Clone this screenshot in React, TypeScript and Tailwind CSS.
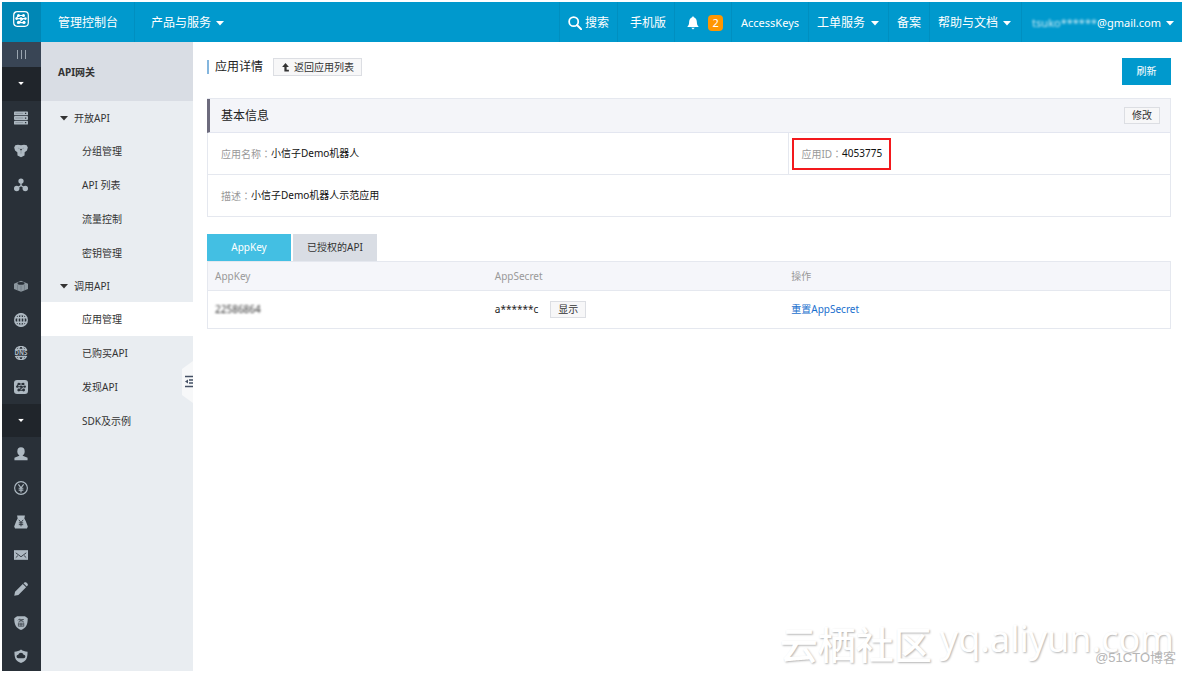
import type { ReactNode } from "react";

const fontStack = "font-['Noto_Sans','Noto_Sans_CJK_SC',sans-serif]";

function Caret({ className = "" }: { className?: string }) {
  return (
    <svg viewBox="0 0 8 5" className={`h-[5px] w-2 shrink-0 ${className}`} fill="currentColor" aria-hidden="true">
      <path d="M0 0h8L4 4.6z" />
    </svg>
  );
}

function Icon({ children, className = "size-[14px]" }: { children: ReactNode; className?: string }) {
  return (
    <svg viewBox="0 0 16 16" className={`${className} shrink-0`} fill="currentColor" aria-hidden="true">
      {children}
    </svg>
  );
}

// network pattern inside the gateway logo
function GatewayNodes({ color }: { color: string }) {
  return (
    <g fill={color} stroke={color}>
      <path d="M5 4.500h6M3.500 7.600h9M10.500 7.600L5.500 11.600h6M5 4.500L3.500 7.600" fill="none" strokeWidth="1.200" />
      <g stroke="none">
        <circle cx="5.500" cy="4.500" r="1.500" />
        <circle cx="10.500" cy="4.500" r="1.500" />
        <circle cx="3.600" cy="7.600" r="1.300" />
        <circle cx="8" cy="7.600" r="1.300" />
        <circle cx="12.400" cy="7.600" r="1.300" />
        <circle cx="5.500" cy="11.400" r="1.600" />
        <circle cx="11" cy="11.400" r="1.600" />
      </g>
    </g>
  );
}

const railItems: { label: string; icon?: ReactNode; toggle?: boolean }[] = [
  { label: "产品与服务", toggle: true },
  {
    label: "云服务器",
    icon: (
      <>
        <rect y="0.5" width="16" height="4.4" rx="1" />
        <rect y="5.8" width="16" height="4.4" rx="1" />
        <rect y="11.1" width="16" height="4.4" rx="1" />
        <path d="M1.5 2.7h9M1.5 8h9M1.5 13.3h9" stroke="#7d8890" strokeWidth="0.8" />
        <path d="M12.5 2h1.5v1.5h-1.5zM12.5 7.3h1.5v1.5h-1.5zM12.5 12.6h1.5v1.5h-1.5z" fill="#293038" />
      </>
    ),
  },
  {
    label: "云数据库",
    icon: (
      <>
        <path d="M1.500 1.500L4.500.8l3.500.7 3.500-.7 3 .7 1.300 2.500-1 3.500-2.600 1.800-.2 3.700L8 15.200l-4-2.200-.2-3.700L1.200 7.500.2 4z" />
        <circle cx="8" cy="6.300" r="1" fill="#293038" />
        <path d="M8 8v3M4.500 4.500l2 1M11.500 4.500l-2 1" stroke="#7d8890" strokeWidth="0.7" />
      </>
    ),
  },
  {
    label: "负载均衡",
    icon: (
      <>
        <circle cx="8" cy="3.500" r="3" />
        <circle cx="3.100" cy="12" r="3.100" />
        <circle cx="12.900" cy="12" r="3.100" />
        <path d="M8 4v4.500M8 8.500L3 12M8 8.500L13 12" stroke="currentColor" strokeWidth="1.500" />
      </>
    ),
  },
  { label: "" },
  { label: "" },
  {
    label: "对象存储",
    icon: (
      <>
        <path d="M0 5.500L8 2l8 3.500v6L8 14.500 0 11.500z" opacity="0.75" />
        <ellipse cx="8" cy="5" rx="4" ry="1.500" fill="#293038" />
        <path d="M4 6.500v6M8 7.500v6M12 6.500v6" stroke="#68737d" strokeWidth="0.7" />
      </>
    ),
  },
  {
    label: "CDN",
    icon: (
      <g fill="none" stroke="currentColor" strokeWidth="1.700">
        <circle cx="8" cy="8" r="7.100" />
        <ellipse cx="8" cy="8" rx="3.500" ry="7.100" />
        <path d="M1 5.500h14M1 10.500h14M8 1v14" />
      </g>
    ),
  },
  {
    label: "云解析",
    icon: (
      <>
        <path
          d="M1.500 4.600A7.200 7.200 0 0 1 14.500 4.600M1.500 11.400A7.200 7.200 0 0 0 14.500 11.400M4.500 4.500L6.500 1M11.500 4.500L9.500 1M4.500 11.500L6.500 15M11.500 11.500L9.500 15M2 4h12M2 12h12"
          fill="none"
          stroke="currentColor"
          strokeWidth="1.500"
        />
        <text x="8" y="10.600" fontSize="7" fontWeight="700" textAnchor="middle">
          DNS
        </text>
      </>
    ),
  },
  {
    label: "API网关",
    icon: (
      <>
        <rect width="16" height="16" rx="3.500" />
        <GatewayNodes color="#293038" />
      </>
    ),
  },
  { label: "用户中心", toggle: true },
  {
    label: "账号管理",
    icon: (
      <>
        <ellipse cx="8" cy="5" rx="4.200" ry="4.600" />
        <path d="M6 8h4v2l5.500 2.300V15H.5v-2.700L6 10z" />
      </>
    ),
  },
  {
    label: "费用",
    icon: (
      <g fill="none" stroke="currentColor">
        <circle cx="8" cy="8" r="7.300" strokeWidth="1.300" />
        <path d="M5 3.800l3 4 3-4M8 7.800V13M5.300 8.300h5.400M5.300 10.500h5.400" strokeWidth="1.300" />
      </g>
    ),
  },
  {
    label: "续费管理",
    icon: (
      <>
        <path d="M3.500.5h9L11.800 4 13.500 7l2.300 6-1 2.500H1.200L.2 13 2.500 7l1.700-3z" />
        <path d="M5.500 5.500L8 8.500l2.500-3M8 8.500V13M5.500 9h5M5.500 11h5" fill="none" stroke="#293038" strokeWidth="1" />
      </>
    ),
  },
  {
    label: "消息中心",
    icon: (
      <>
        <rect y="2.500" width="16" height="11" />
        <path d="M2 5.500l6 4.500 6-4.500M2 11l2.500-2.300M14 11l-2.500-2.300" fill="none" stroke="#293038" strokeWidth="1" />
      </>
    ),
  },
  {
    label: "工单管理",
    icon: <path d="M.3 15.700L1.200 11 10 2.200 13.800 6 5 14.800zM10.800 1.500L12.300.2h1.500L15.800 2.200v1.500L14.500 5.200z" />,
  },
  {
    label: "备案管理",
    icon: (
      <>
        <path d="M8 16C2.500 13.500.3 10.500.3 2.500L3.500.2h9l3.200 2.300C15.700 10.500 13.500 13.500 8 16z" />
        <path d="M6.500 3L4.500 5M6 4h5L5 7M6 4.500L11.500 7M5 8.200h6.200v3.500H5zM8 8.200v3.500M5 10h6" fill="none" stroke="#293038" strokeWidth="0.700" />
      </>
    ),
  },
  {
    label: "安全管控",
    icon: (
      <>
        <path d="M8 16C2.500 13.500.5 11.500.5 3 3.500 3 6 2 8 .5 10 2 12.500 3 15.500 3 15.500 11.500 13.500 13.500 8 16z" />
        <path d="M5 10.500a2 2 0 0 1-.2-4 3.300 3.300 0 0 1 6.200 0 2 2 0 0 1 0 4z" fill="#293038" />
      </>
    ),
  },
];

const menuGroups = [
  { title: "开放API", items: ["分组管理", "API 列表", "流量控制", "密钥管理"] },
  { title: "调用API", items: ["应用管理", "已购买API", "发现API", "SDK及示例"] },
];

function NavItem({ children, className = "px-[9px]" }: { children: ReactNode; className?: string }) {
  return (
    <a href="#" className={`flex items-center whitespace-nowrap border-l border-[#008fc0] pt-[2px] ${className}`}>
      {children}
    </a>
  );
}

function TopBar() {
  return (
    <header className="flex h-10 shrink-0 bg-[#0099cd] text-xs text-white">
      <a href="#" aria-label="API网关" className="flex w-[39px] items-start justify-center bg-[#0087b5] pr-px pt-[9px]">
        <Icon className="size-4">
          <rect x="0.700" y="0.700" width="14.600" height="14.600" rx="3.500" fill="none" stroke="currentColor" strokeWidth="1.200" />
          <GatewayNodes color="#fff" />
        </Icon>
      </a>
      <a href="#" className="flex w-[93px] items-center pl-[17px] pt-[2px]">
        管理控制台
      </a>
      <NavItem className="gap-[5px] px-4">
        产品与服务
        <Caret />
      </NavItem>
      <nav className="ml-auto flex">
        <NavItem className="gap-[3px] px-2">
          <Icon>
            <circle cx="6.500" cy="6.500" r="5.200" fill="none" stroke="currentColor" strokeWidth="2" />
            <path d="M10.500 10.500L15 15" stroke="currentColor" strokeWidth="2.400" strokeLinecap="round" />
          </Icon>
          搜索
        </NavItem>
        <NavItem className="pl-3 pr-2">手机版</NavItem>
        <NavItem className="gap-2 pl-[11px] pr-2">
          <Icon>
            <path d="M8 0l1 1.500C12 2.500 12.300 5 12.500 8c.1 2 1 3 2 4.500h-13C2.500 11 3.400 10 3.500 8 3.700 5 4 2.500 7 1.500zM6 13.500h4L8 15.500z" />
          </Icon>
          <span className="flex h-4 w-[15px] items-center justify-center rounded bg-[#ff9600] text-[11px]">2</span>
        </NavItem>
        <NavItem className="px-[9px] text-[11px]">AccessKeys</NavItem>
        <NavItem className="gap-[6px] pl-2 pr-[9px]">
          工单服务
          <Caret />
        </NavItem>
        <NavItem className="px-2">备案</NavItem>
        <NavItem className="gap-[5px] pl-2 pr-[10px]">
          帮助与文档
          <Caret />
        </NavItem>
        <NavItem className="pl-[10px] pr-2 text-[11px]">
          <span className="opacity-80 blur-[1px]">tsuko******</span>
          <span className="mr-[5px]">@gmail.com</span>
          <Caret />
        </NavItem>
      </nav>
    </header>
  );
}

function Rail() {
  return (
    <nav className="flex w-[39px] shrink-0 flex-col overflow-hidden bg-[#293038] text-[#aeb9c2]">
      <button type="button" aria-label="展开" className="flex h-[25px] items-center justify-center gap-[3px] bg-[#394555] pr-px">
        <span className="h-[9px] w-px bg-[#9aa5b0]" />
        <span className="h-[9px] w-px bg-[#9aa5b0]" />
        <span className="h-[9px] w-px bg-[#9aa5b0]" />
      </button>
      <ul className="-mb-[2px] flex flex-1 flex-col">
        {railItems.map((item, i) => (
          <li key={i} className={`flex min-h-8 flex-1 pr-px ${item.toggle ? "bg-[#20252b] text-white" : ""}`}>
            {item.toggle && (
              <button type="button" aria-label={item.label} className="flex flex-1 items-center justify-center">
                <Caret className="scale-75" />
              </button>
            )}
            {item.icon && (
              <a href="#" aria-label={item.label} className="flex flex-1 items-center justify-center">
                <Icon>{item.icon}</Icon>
              </a>
            )}
          </li>
        ))}
      </ul>
    </nav>
  );
}

function SideMenu() {
  return (
    <aside className="relative w-[152px] shrink-0 bg-[#e9edf1] text-[10px] text-[#333]">
      <h2 className="mb-px flex h-[59px] items-center bg-[#d9dde4] pl-[17px] pt-px font-bold">API网关</h2>
      {menuGroups.map((group) => (
        <section key={group.title}>
          <button type="button" className="flex h-8 w-full items-center gap-[6px] pl-[19px]">
            <Caret />
            {group.title}
          </button>
          <ul>
            {group.items.map((item) => (
              <li key={item} className={item === "应用管理" ? "bg-white" : ""}>
                <a href="#" className="flex h-[34px] items-center pl-[41px] pt-px">
                  {item}
                </a>
              </li>
            ))}
          </ul>
        </section>
      ))}
      <button type="button" aria-label="收起" className="absolute right-0 top-[319px]">
        <svg viewBox="0 0 11 42" className="h-[42px] w-[11px]" aria-hidden="true">
          <path d="M11 0L0 8v26l11 8z" fill="#f7f8f9" />
          <path d="M3 15.500h8M3 25.500h8M7 19h4M7 22h4" stroke="#445064" strokeWidth="1.400" />
          <path d="M3 20.500L6 18.500v4z" fill="#445064" />
        </svg>
      </button>
    </aside>
  );
}

const smallButton = "flex items-center justify-center border border-[#dcdee3] bg-[#f7f7f8] text-[10px] text-[#333]";

function Field({ label, value }: { label: string; value: string }) {
  return (
    <>
      <dt className="text-[#999]">
        {label}
        <span className="font-['Noto_Sans_CJK_TC',sans-serif]">：</span>
      </dt>
      <dd className="text-[#111]">{value}</dd>
    </>
  );
}

function BasicInfo() {
  return (
    <section className="mt-[13px] border border-[#e5e8ef] text-[10px]">
      <div className="-ml-px flex h-[34px] items-center justify-between border-b border-l-[3px] border-b-[#e3e6f0] border-l-[#6d6b7d] bg-[#f4f5f9] pl-[11px] pr-[10px]">
        <h3 className="pt-px text-xs text-[#222]">基本信息</h3>
        <button type="button" className={`${smallButton} h-[17px] w-9`}>
          修改
        </button>
      </div>
      <dl className="grid grid-cols-[581fr_382fr]">
        <div className="flex h-[42px] items-center border-b border-[#e5e8ef] pl-[13px]">
          <Field label="应用名称" value="小信子Demo机器人" />
        </div>
        <div className="flex h-[42px] items-center border-b border-l border-[#e5e8ef] pl-[3px]">
          <div className="flex h-8 items-center border-2 border-[#f3191d] px-[7px]">
            <Field label="应用ID" value="4053775" />
          </div>
        </div>
        <div className="col-span-2 flex h-[41px] items-center pl-[13px]">
          <Field label="描述" value="小信子Demo机器人示范应用" />
        </div>
      </dl>
    </section>
  );
}

function KeyTable() {
  return (
    <section className="mt-[17px] text-[10px]">
      <div className="flex gap-[2px]" role="tablist">
        <button type="button" role="tab" aria-selected="true" className="h-[27px] w-[84px] bg-[#43bfe3] text-white">
          AppKey
        </button>
        <button type="button" role="tab" aria-selected="false" className="h-[27px] w-[84px] bg-[#d9dde4] text-[#333]">
          已授权的API
        </button>
      </div>
      <table className="w-full table-fixed border-collapse border border-[#e5e8ef] text-left">
        <thead className="bg-[#f5f6fa] text-[#999]">
          <tr className="h-[29px]">
            <th className="w-[29%] pl-[7px] font-normal">AppKey</th>
            <th className="w-[31%] pl-2 font-normal">AppSecret</th>
            <th className="pl-[6px] font-normal">操作</th>
          </tr>
        </thead>
        <tbody>
          <tr className="h-[38px] border-t border-[#e5e8ef]">
            <td className="pl-[7px]">
              <span className="text-[#333] blur-[1px]">22586864</span>
            </td>
            <td className="pl-2">
              <div className="flex items-center gap-3 text-[#222]">
                a******c
                <button type="button" className={`${smallButton} h-[17px] w-9`}>
                  显示
                </button>
              </div>
            </td>
            <td className="pl-[6px]">
              <a href="#" className="text-[#1a6fce]">
                重置AppSecret
              </a>
            </td>
          </tr>
        </tbody>
      </table>
    </section>
  );
}

export default function App() {
  return (
    <div className={`relative flex min-h-screen flex-col bg-white p-[2px] ${fontStack}`}>
      <TopBar />
      <div className="flex flex-1">
        <Rail />
        <SideMenu />
        <main className="min-w-0 flex-1 pl-[14px] pr-[11px] pt-4">
          <div className="flex items-start justify-between">
            <div className="flex h-[18px] items-center">
              <h1 className="border-l-2 border-[#84b6de] pl-[6px] text-xs leading-[14px] text-[#222]">应用详情</h1>
              <button type="button" className={`${smallButton} ml-[10px] h-[18px] gap-1 px-[7px]`}>
                <Icon className="size-[9px]">
                  <path d="M8 0l6 7h-4v5h4v3H6V7H2z" />
                </Icon>
                返回应用列表
              </button>
            </div>
            <button type="button" className="h-[27px] w-[49px] bg-[#0099cd] text-[10px] text-white">
              刷新
            </button>
          </div>
          <BasicInfo />
          <KeyTable />
        </main>
      </div>
      <div className="pointer-events-none absolute bottom-1 right-[10px] flex items-start gap-2 whitespace-nowrap text-white [text-shadow:1px_1px_2px_#b5b5b5]">
        <span className="text-[38px] font-medium leading-[50px]">云栖社区</span>
        <span className="text-4xl leading-10">yq.aliyun.com</span>
      </div>
      <span className="pointer-events-none absolute bottom-[7px] right-2 font-['Liberation_Sans','Noto_Sans_CJK_SC',sans-serif] text-[13px] leading-4 text-[#b5b5b5]">
        @51CTO博客
      </span>
    </div>
  );
}
